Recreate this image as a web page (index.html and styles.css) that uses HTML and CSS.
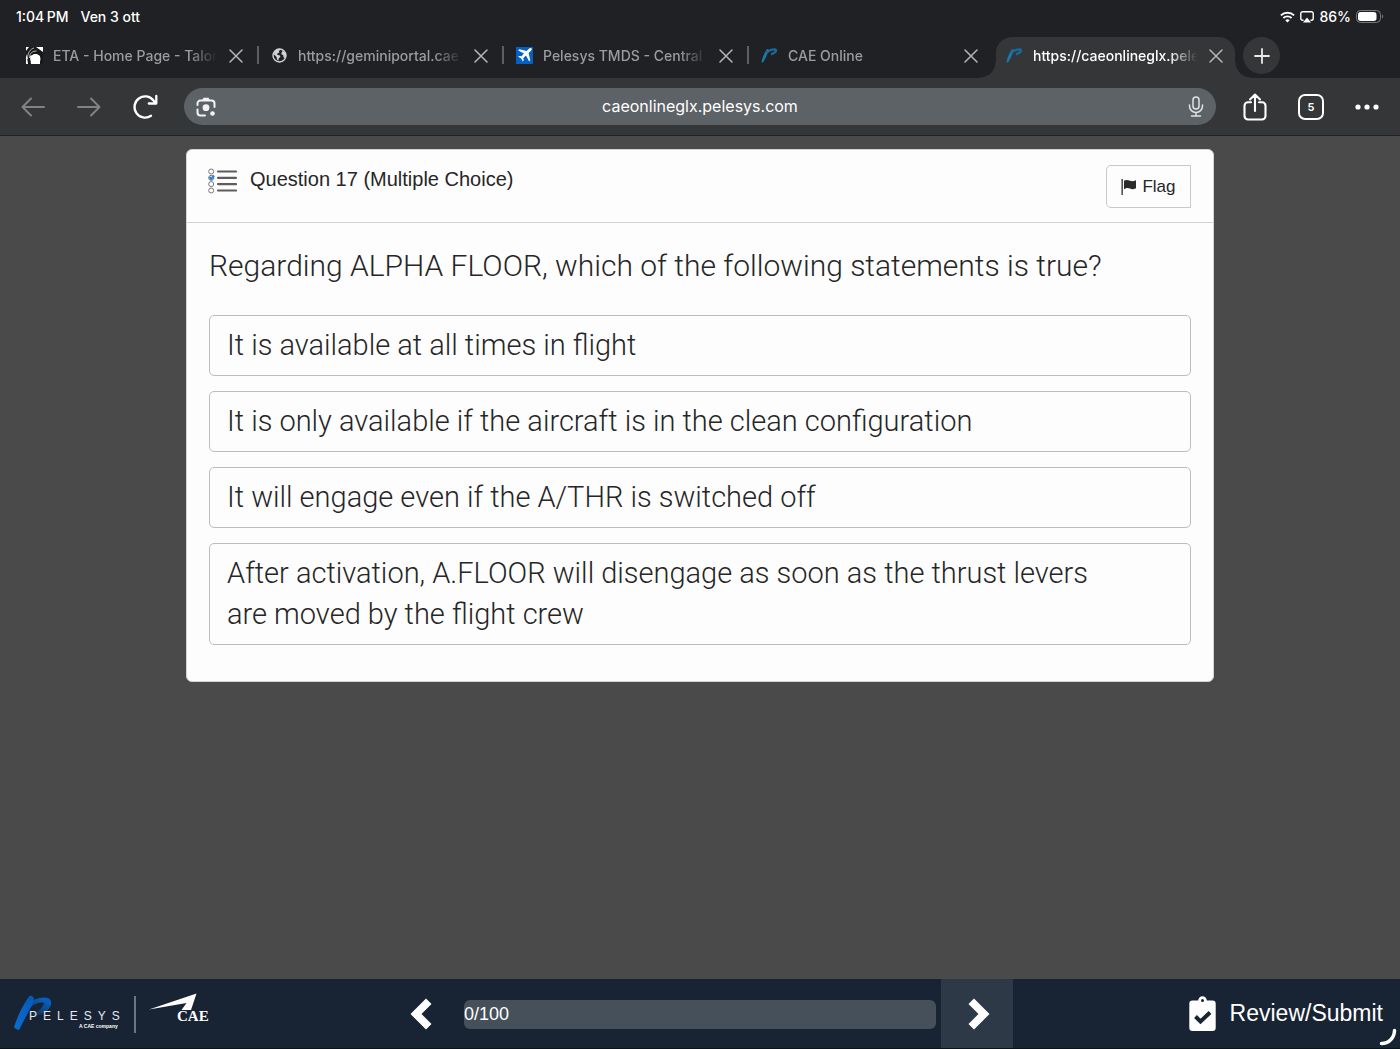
FILE: index.html
```html
<!DOCTYPE html>
<html lang="en">
<head>
<meta charset="utf-8">
<meta name="viewport" content="width=device-width, initial-scale=1">
<title>caeonlineglx.pelesys.com</title>
<link rel="stylesheet" href="styles.css">
</head>
<body>
<svg class="defs" width="0" height="0" aria-hidden="true">
  <defs>
    <linearGradient id="swoosh" x1="0" y1="1" x2="1" y2="0"><stop offset="0" stop-color="#0a6fd0"/><stop offset="1" stop-color="#0756b4"/></linearGradient>
    <linearGradient id="bowl" x1="1" y1="0" x2="0.3" y2="1"><stop offset="0.2" stop-color="#0660c0"/><stop offset="1" stop-color="#0660c0" stop-opacity="0.15"/></linearGradient>
  </defs>
  <symbol id="i-close" viewBox="0 0 14 14"><path d="M1 1l12 12M13 1L1 13" fill="none" stroke="currentColor" stroke-width="1.5" stroke-linecap="round"/></symbol>
  <symbol id="i-pel" viewBox="0 0 17 17"><path d="M.6 14.500C1.200 11 4 4.500 6 2.200c1-.5 1.800.3 1.400 1.600C6.500 7 4.500 11.500 2.600 14.800c-.6 1-2.200.900-2-.3z" fill="#1b78ae"/><path d="M5.500 5.800C8 3 12.500 1.800 14.500 2.600c1.600 1-.8 3.900-4.500 4.600" fill="none" stroke="#1a6a9a" stroke-width="2.400"/></symbol>
</svg>

<header class="browser">
  <div class="status">
    <div class="status-side"><span>1:04&#8201;PM</span><span>Ven 3 ott</span></div>
    <div class="status-icons">
      <svg width="15" height="12" viewBox="0 0 15 12" aria-label="Wi-Fi"><g fill="none" stroke="#fff" stroke-width="1.900"><path d="M.9 4.400a9.600 9.600 0 0 1 13.200 0"/><path d="M3.400 7a6 6 0 0 1 8.200 0"/></g><path d="M7.500 11.500L5.300 9.200a3.200 3.200 0 0 1 4.400 0z" fill="#fff"/></svg>
      <svg width="14" height="12" viewBox="0 0 14 12" aria-label="Screen mirroring"><path d="M3.500 9.200H2.600A1.800 1.800 0 0 1 .8 7.400V2.600A1.800 1.800 0 0 1 2.600.8h8.800a1.800 1.800 0 0 1 1.800 1.800v4.800a1.800 1.800 0 0 1-1.800 1.800h-.9" fill="none" stroke="#fff" stroke-width="1.400"/><path d="M7 6.500l4 5H3z" fill="#fff"/></svg>
      <span>86%</span>
      <svg width="28" height="13" viewBox="0 0 28 13" aria-label="Battery"><rect x=".5" y=".5" width="24" height="12" rx="4" fill="none" stroke="#77787b"/><rect x="2" y="2" width="18.500" height="9" rx="2.700" fill="#fff"/><path d="M26 4.500v4c1.600-.6 1.600-3.400 0-4z" fill="#77787b"/></svg>
    </div>
  </div>

  <nav class="tabs" aria-label="Tabs">
    <div class="tab">
      <svg class="fav" viewBox="0 0 17 17"><path fill="#fff" d="M0 0h17v17H0z"/><path d="M3 0h9l5 3v14h-3V9L9 7 4 9l1 8H2L1 10 0 7V4z" fill="#17181a"/><circle cx="9.500" cy="12" r="5" fill="#fff"/><path d="M10 0l7 5V0z" fill="#fff"/><path d="M0 9l1.500 8H0z" fill="#fff"/><path d="M1.500 12C1.500 6 4 2 8 1M3.500 11c0-5 3-7 7-7" fill="none" stroke="#fff" stroke-width=".7"/></svg>
      <a class="tab-title" href="#eta">ETA - Home Page - Talor</a>
      <button class="close" aria-label="Close tab"><svg><use href="#i-close"/></svg></button>
    </div>
    <div class="tab">
      <svg class="fav" viewBox="0 0 17 17"><circle cx="8.500" cy="8.500" r="6.500" fill="none" stroke="#d0d2d4" stroke-width="1.400"/><path d="M3.500 4.500c1.500-2 3-2.800 5-2.700l.8 1.300-1.500 1 .5 1.400-2 .9v1.500l2.300.4.8 1.500-1.700 1.700-.3 2.300-1.500-1.500-.3-2.300L3 7.500zM11 4.200l2.800.3 1.400 4-1.200 2.700-1.500-1-.2-1.900-2-1z" fill="#d0d2d4"/></svg>
      <a class="tab-title" href="#gemini">https://geminiportal.cae</a>
      <button class="close" aria-label="Close tab"><svg><use href="#i-close"/></svg></button>
    </div>
    <div class="tab">
      <svg class="fav" viewBox="0 0 17 17"><path fill="#0660c4" d="M0 0h17v17H0z"/><path d="M15.500 1.400c-.8-.7-2-.2-2.800.6L10.600 4 3.300 2.300 2.200 3.400l5.800 3.200-2.500 2.700-2.400-.4-.9.900 3 1.600 1.600 3 .9-.9-.4-2.400 2.700-2.500 3.200 5.800 1.100-1.100-1.700-7.200 2.100-2.100c.8-.8 1.400-2 .8-2.600z" fill="#fff"/></svg>
      <a class="tab-title" href="#tmds">Pelesys TMDS - Central</a>
      <button class="close" aria-label="Close tab"><svg><use href="#i-close"/></svg></button>
    </div>
    <div class="tab">
      <svg class="fav"><use href="#i-pel"/></svg>
      <a class="tab-title" href="#cae">CAE Online</a>
      <button class="close" aria-label="Close tab"><svg><use href="#i-close"/></svg></button>
    </div>
    <div class="tab active">
      <svg class="fav"><use href="#i-pel"/></svg>
      <a class="tab-title" href="#exam" aria-current="page">https://caeonlineglx.pele</a>
      <button class="close" aria-label="Close tab"><svg><use href="#i-close"/></svg></button>
    </div>
    <button class="new-tab" aria-label="New tab"><svg width="16" height="16" viewBox="0 0 16 16"><path d="M8 1v14M1 8h14" stroke="#e8eaed" stroke-width="1.800" stroke-linecap="round"/></svg></button>
  </nav>

  <div class="toolbar">
    <div class="tools">
      <button class="tool" aria-label="Back"><svg width="24" height="20" viewBox="0 0 24 20"><path d="M23 10H1.500M10 1.500L1.500 10l8.500 8.500" fill="none" stroke="#808284" stroke-width="2" stroke-linecap="round" stroke-linejoin="round"/></svg></button>
      <button class="tool" aria-label="Forward"><svg width="24" height="20" viewBox="0 0 24 20"><path d="M1 10h21.500M14 1.500l8.500 8.500-8.500 8.500" fill="none" stroke="#808284" stroke-width="2" stroke-linecap="round" stroke-linejoin="round"/></svg></button>
      <button class="tool" aria-label="Reload"><svg width="26" height="26" viewBox="0 0 26 26"><path d="M19 21.800A10.600 10.600 0 1 1 21.500 6.500l2 2.500M24.300 2v7.500h-7.500" fill="none" stroke="#fff" stroke-width="2.300" stroke-linecap="round" stroke-linejoin="round"/></svg></button>
    </div>
    <div class="address">
      <button class="plain" aria-label="Search with camera"><svg width="20" height="20" viewBox="0 0 20 20"><g fill="none" stroke="#f1f3f4" stroke-width="2" stroke-linecap="round"><path d="M1.500 8V6.500a3 3 0 0 1 3-3h11a3 3 0 0 1 3 3V10M1.500 12.500v3a3 3 0 0 0 3 3H9"/></g><path d="M6 3.500L7.500.8h5L14 3.500z" fill="#f1f3f4"/><circle cx="10" cy="10.700" r="3.400" fill="#f1f3f4"/><circle cx="16.500" cy="16.500" r="2.300" fill="#f1f3f4"/></svg></button>
      <input class="url" type="text" value="caeonlineglx.pelesys.com" aria-label="Address">
      <button class="plain" aria-label="Voice search"><svg width="16" height="21" viewBox="0 0 16 21"><g fill="none" stroke="#e0e2e3" stroke-width="1.500" stroke-linecap="round"><rect x="5" y="1" width="6" height="12" rx="3"/><path d="M1.500 9v1a6.500 6.500 0 0 0 13 0V9M8 16.500v3M3.500 20h9"/></g></svg></button>
    </div>
    <div class="tools">
      <button class="tool" aria-label="Share"><svg width="24" height="28" viewBox="0 0 24 28"><path d="M8 9.200H5A3.500 3.500 0 0 0 1.500 12.700V23A3.500 3.500 0 0 0 5 26.500h14a3.500 3.500 0 0 0 3.500-3.500V12.700A3.500 3.500 0 0 0 19 9.200h-3M12 18V1.800M7 6.500l5-5 5 5" fill="none" stroke="#fff" stroke-width="2.100" stroke-linecap="round" stroke-linejoin="round"/></svg></button>
      <button class="tool tab-count" aria-label="5 tabs">5</button>
      <button class="tool" aria-label="Menu"><svg width="24" height="6" viewBox="0 0 24 6" fill="#fff"><circle cx="3" cy="3" r="2.600"/><circle cx="12" cy="3" r="2.600"/><circle cx="21" cy="3" r="2.600"/></svg></button>
    </div>
  </div>
</header>

<main class="page">
  <form class="card">
    <div class="card-head">
      <svg width="29" height="26" viewBox="0 0 29 26"><g stroke="#5d5d5d" stroke-width="2.200" stroke-linecap="round"><path d="M10 3.500h18M10 9.800h18M10 16.100h18M10 22.500h18"/></g><g fill="#fff" stroke="#777"><circle cx="3.200" cy="3.500" r="2.500"/><circle cx="3.200" cy="9.800" r="2.500"/><circle cx="3.200" cy="16.100" r="2.500"/><circle cx="3.200" cy="22.500" r="2.500"/></g><path d="M1.500 9l1.700 2L6 7.500" fill="none" stroke="#2b86dc" stroke-width="2.200"/></svg>
      <h1>Question 17 (Multiple Choice)</h1>
      <button class="flag" type="button"><svg width="16" height="16" viewBox="0 0 16 16" fill="#2b2b2b"><path d="M.5 0h1.300v16H.5zM3 1.800C5.500.4 7 1 9 1.800c2 .8 3.500.5 6-.6v8c-2.500 1.200-4 1.200-6 .4-2-.8-3.500-1-6 .6z"/></svg>Flag</button>
    </div>
    <fieldset class="question">
      <legend>Regarding ALPHA FLOOR, which of the following statements is true?</legend>
      <label class="option"><input type="radio" name="answer">It is available at all times in flight</label>
      <label class="option"><input type="radio" name="answer">It is only available if the aircraft is in the clean configuration</label>
      <label class="option"><input type="radio" name="answer">It will engage even if the A/THR is switched off</label>
      <label class="option"><input type="radio" name="answer">After activation, A.FLOOR will disengage as soon as the thrust levers are moved by the flight crew</label>
    </fieldset>
  </form>
</main>

<footer class="bar">
  <svg class="logos" width="196" height="42" viewBox="0 0 196 42" role="img" aria-label="Pelesys, a CAE company">
    <path d="M.3 33.500C3 24 10 10 15.500 3l1.500-.6C21 4 20.500 6 18 12L5.500 36c-.8 1.800-2 1.200-3-.2C1 35.500 0 35 .3 33.500z" fill="url(#swoosh)"/>
    <path d="M12 12C19 6 29 2.500 35 5.500c6 5-1 16-14.500 17.500L16 22c8-2 14-9 14-12-3-2-11 1-16 7z" fill="url(#bowl)"/>
    <text x="15" y="27" class="logo-name">PELESYS</text>
    <text x="65" y="35" class="logo-sub">A CAE company</text>
    <path d="M121 3v37" stroke="#8a929b" stroke-width="1.500"/>
    <path d="M135 16.500L182.500.5 177 17h-9.500l5-7z" fill="#fff"/>
    <text x="163" y="28" class="logo-cae">CAE</text>
  </svg>
  <div class="progress-nav">
    <button class="step" aria-label="Previous question"><svg width="22" height="32" viewBox="0 0 22 32"><path d="M16 .5l5.500 5.500-10 10 10 10L16 31.500.5 16z" fill="#fff"/></svg></button>
    <div class="progress" role="progressbar" aria-valuemin="0" aria-valuemax="100" aria-valuenow="0">0/100</div>
    <button class="step next" aria-label="Next question"><svg width="22" height="32" viewBox="0 0 22 32"><path d="M6 .5L.5 6l10 10-10 10L6 31.500 21.500 16z" fill="#fff"/></svg></button>
  </div>
  <button class="submit"><svg width="27" height="35" viewBox="0 0 27 35"><path fill="#fff" fill-rule="evenodd" d="M3.500 4.500h5.700a4.300 4.300 0 0 1 8.600 0h5.700A3.200 3.200 0 0 1 26.700 7.700v24a3.200 3.200 0 0 1-3.200 3.200h-20A3.200 3.200 0 0 1 .3 31.700v-24a3.200 3.200 0 0 1 3.200-3.200zM13.500 3.100a1.500 1.500 0 1 0 0 3 1.500 1.500 0 0 0 0-3z"/><path d="M6.500 20.500l5 5 9.500-9" fill="none" stroke="#182433" stroke-width="4"/></svg>Review/Submit</button>
  <svg class="corner" width="18" height="18" viewBox="0 0 18 18" aria-hidden="true"><path d="M2.500 15.500A13 13 0 0 0 15.500 2.500" fill="none" stroke="#fff" stroke-width="3.500" stroke-linecap="round"/></svg>
</footer>
</body>
</html>
```
FILE: styles.css
```css
*,
*::before,
*::after {
  box-sizing: border-box;
}

body {
  margin: 0;
  min-height: 100vh;
  display: flex;
  flex-direction: column;
  background: #4a4a4a;
  color: #262626;
  font-family: Inter, "Liberation Sans", sans-serif;
}

.defs {
  position: absolute;
}

svg {
  display: block;
  flex: none;
}

button {
  margin: 0;
  padding: 0;
  border: 0;
  background: none;
  color: inherit;
  font: inherit;
  cursor: pointer;
}

/* Browser chrome */
.browser {
  background: #202124;
  color: #fff;
}

.status {
  display: flex;
  justify-content: space-between;
  align-items: center;
  height: 37px;
  padding: 0 16px 4px;
  font-size: 14px;
  font-weight: 500;
}

.status-side {
  display: flex;
  gap: 12px;
}

.status-icons {
  display: flex;
  align-items: center;
  gap: 5px;
}

.tabs {
  display: flex;
  height: 41px;
  padding-left: 14px;
}

.tab {
  position: relative;
  display: flex;
  align-items: center;
  flex: 0 1 245px;
  min-width: 0;
  padding: 0 16px 4px 12px;
  color: #9a9c9f;
}

.tab:not(:nth-child(n + 4))::after {
  content: "";
  position: absolute;
  right: 0;
  top: 9px;
  width: 2px;
  height: 18px;
  background: #5c6064;
}

.fav {
  width: 17px;
  height: 17px;
}

.tab-title {
  flex: 1;
  min-width: 0;
  margin: 0 10px;
  overflow: hidden;
  white-space: nowrap;
  color: inherit;
  font-size: 14px;
  font-weight: 500;
  line-height: 20px;
  text-decoration: none;
  -webkit-mask-image: linear-gradient(to right, #000 82%, transparent 99%);
  mask-image: linear-gradient(to right, #000 82%, transparent 99%);
}

.close svg {
  width: 14px;
  height: 14px;
}

.close {
  color: #b4b6b9;
}

.active {
  flex-basis: 239px;
  margin: 0 4px 0 2px;
  padding: 0 12px 4px 10px;
  border-radius: 16px 16px 0 0;
  background: #353638;
  color: #fff;
}

.active::before,
.active::after {
  content: "";
  position: absolute;
  bottom: 0;
  width: 16px;
  height: 16px;
}

.active::before {
  right: 100%;
  background: radial-gradient(circle at 0 0, transparent 15px, #353638 16px);
}

.active::after {
  left: 100%;
  background: radial-gradient(circle at 100% 0, transparent 15px, #353638 16px);
}

.new-tab {
  position: relative;
  display: grid;
  place-items: center;
  flex: none;
  width: 37px;
  height: 37px;
  margin-left: 4px;
  border-radius: 50%;
  background: #353638;
}

.toolbar {
  display: flex;
  align-items: center;
  gap: 11px;
  height: 58px;
  padding: 0 5px;
  border-bottom: 1px solid #222;
  background: #353638;
}

.tools {
  display: flex;
  align-items: center;
}

.tool {
  display: grid;
  place-items: center;
  width: 56px;
  height: 40px;
}

.tab-count {
  width: 26px;
  height: 26px;
  margin: 0 15px;
  border: 2px solid #fff;
  border-radius: 7px;
  font-size: 11px;
  font-weight: 600;
}

.address {
  display: flex;
  align-items: center;
  flex: 1;
  min-width: 0;
  height: 37px;
  padding: 0 12px;
  border-radius: 19px;
  background: #5d6266;
}

.url {
  flex: 1;
  min-width: 0;
  border: 0;
  padding: 0 4px 2px 0;
  background: none;
  color: #fff;
  font: 400 16px/24px Inter, sans-serif;
  text-align: center;
}

/* Question */
.page {
  flex: 1;
  padding: 13px 16px;
}

.card {
  max-width: 1028px;
  margin: 0 auto;
  border: 1px solid #d4d4d4;
  border-radius: 6px;
  background: #fdfdfd;
}

.card-head {
  display: flex;
  align-items: flex-start;
  gap: 13px;
  padding: 15px 22px 14px 21px;
  border-bottom: 1px solid #d2d2d2;
}

.card-head > svg {
  margin-top: 3px;
}

h1 {
  flex: 1;
  margin: 0;
  font: 400 20px/28px "Liberation Sans", sans-serif;
}

.flag {
  display: flex;
  align-items: center;
  justify-content: center;
  gap: 5px;
  width: 85px;
  height: 43px;
  border: 1px solid #c8c8c8;
  border-radius: 5px 0 0 5px;
  font: 400 17px/24px "Liberation Sans", sans-serif;
}

.question {
  display: flex;
  flex-direction: column;
  gap: 15px;
  margin: 0;
  padding: 0 22px 36px;
  border: 0;
  min-width: 0;
  font-family: Roboto, "Liberation Sans", sans-serif;
  font-size: 29px;
  font-weight: 300;
  line-height: 41px;
}

legend {
  padding: 22px 0 29px;
  font-size: 30px;
}

.option {
  position: relative;
  padding: 9px 60px 9px 17px;
  border: 1px solid #bdbdbd;
  border-radius: 5px;
}

.option input {
  position: absolute;
  inset: 0;
  margin: 0;
  appearance: none;
  border-radius: 5px;
  cursor: pointer;
}

.option input:checked {
  box-shadow: 0 0 0 2px #0660c4;
}

/* Bottom bar */
.bar {
  position: relative;
  display: grid;
  grid-template-columns: 1fr minmax(0, 630px) 1fr;
  align-items: center;
  height: 70px;
  border-bottom: 1px solid #0a121c;
  background: #182433;
  color: #fff;
  font-family: "Liberation Sans", sans-serif;
}

.logos {
  margin-left: 14px;
}

.logo-name {
  fill: #e6e9ed;
  font: 400 12px "Liberation Sans", sans-serif;
  letter-spacing: 6px;
}

.logo-sub {
  fill: #fff;
  font: 700 5px "Liberation Sans", sans-serif;
}

.logo-cae {
  fill: #fff;
  font: 700 15px "Liberation Serif", serif;
}

.progress-nav {
  display: flex;
  align-items: center;
  padding-right: 2px;
}

.step {
  display: grid;
  place-items: center;
  flex: none;
  width: 72px;
  height: 69px;
}

.next {
  padding-left: 4px;
  background: #2e3947;
}

.progress {
  flex: 1;
  height: 29px;
  margin: 2px 5px 0 7px;
  border-radius: 6px;
  background: #45505b;
  font-size: 18px;
  line-height: 29px;
}

.submit {
  display: flex;
  align-items: center;
  justify-self: end;
  gap: 14px;
  margin-right: 17px;
  font-size: 23px;
}

.corner {
  position: absolute;
  right: 3px;
  bottom: 2px;
}
```
